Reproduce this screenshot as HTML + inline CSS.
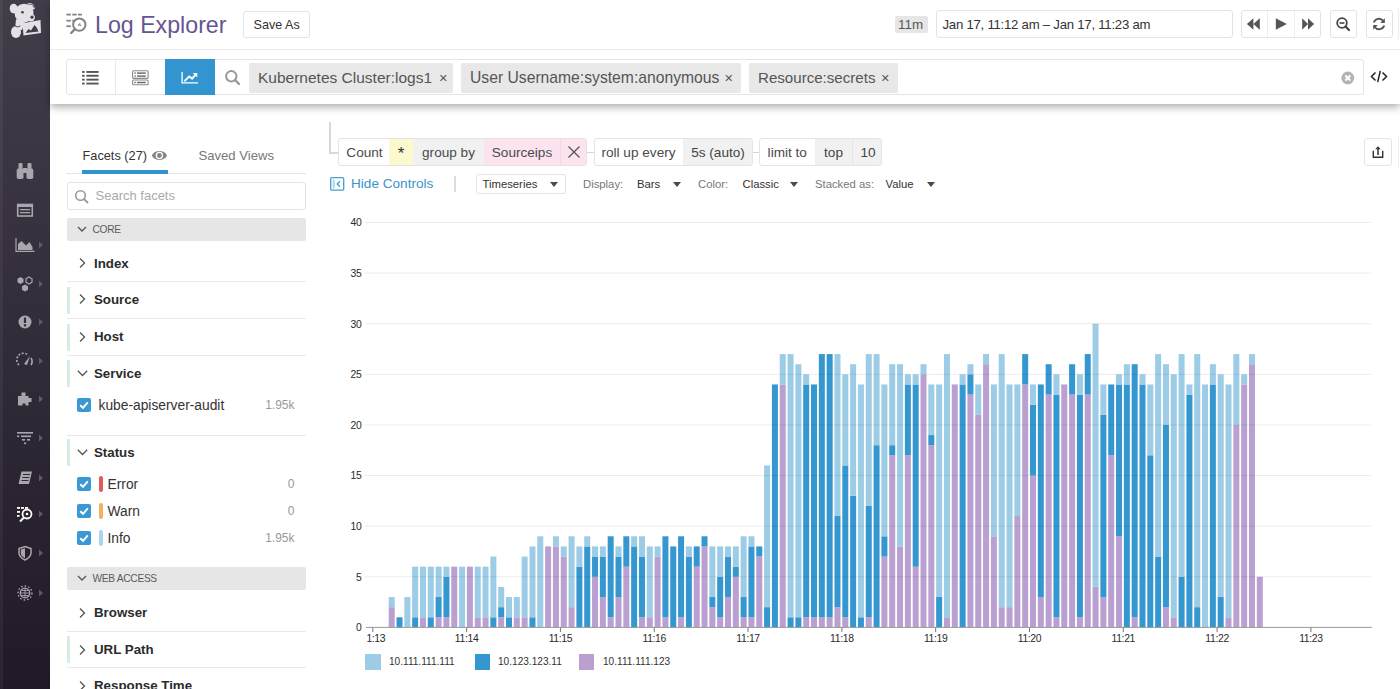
<!DOCTYPE html>
<html><head><meta charset="utf-8">
<style>
*{box-sizing:border-box;margin:0;padding:0}
html,body{width:1400px;height:689px;overflow:hidden;background:#fff;font-family:"Liberation Sans",sans-serif;color:#333}
.a{position:absolute}
.t{position:absolute;white-space:nowrap;line-height:1}
#side{left:0;top:0;width:50px;height:689px;background:linear-gradient(#433d4a,#211926)}
#hdr{left:50px;top:0;width:1350px;height:104px;background:#fff;box-shadow:0 3px 8px rgba(0,0,0,0.33)}
.btn{position:absolute;border:1px solid #e3e3e3;border-radius:3px;background:#fff}
.tag{position:absolute;top:62.5px;height:30.5px;background:#e8e8e8;border-radius:2px;color:#555;font-size:15.5px;line-height:30px;white-space:nowrap}
.tag .x{position:absolute;font-size:14.5px;color:#555}
.frow{position:absolute;left:67px;width:239px;height:37px;border-bottom:1px solid #e8e8e8}
.frow .gb{position:absolute;left:0;top:5px;width:3px;height:27px;background:#d3eedc}
.frow .lab{position:absolute;left:27px;top:0;line-height:36px;font-size:13.7px;font-weight:bold;color:#2b2b2b;white-space:nowrap}
.chev{position:absolute}
.sect{position:absolute;left:67px;width:239px;height:23px;background:#e6e6e6;border-radius:2px;color:#5a5a5a;font-size:10.2px;letter-spacing:-0.3px;line-height:23px}
.cb{position:absolute;left:77px;width:14px;height:14px;background:#3a98d4;border-radius:2px}
.item{position:absolute;font-size:13.8px;color:#333;white-space:nowrap;line-height:16px}
.cnt{position:absolute;font-size:12px;color:#999;white-space:nowrap;line-height:16px;text-align:right;width:60px;left:234.5px}
.qb{position:absolute;top:138px;height:27.5px;border:1px solid #e4e4e4;border-radius:3px;background:#fff;overflow:hidden}
.qc{position:absolute;top:0;height:25.5px;line-height:27px;font-size:13.6px;color:#4a4a4a;white-space:nowrap}
.dd{position:absolute;font-size:11.3px;color:#333;white-space:nowrap;line-height:14px}
.dl{position:absolute;font-size:11.3px;color:#777;white-space:nowrap;line-height:14px}
.arr{position:absolute;width:0;height:0;border-left:4px solid transparent;border-right:4px solid transparent;border-top:5px solid #4a4a4a}
</style></head><body>

<div id="side" class="a">
<div class="a" style="left:0;top:0;width:2.5px;height:689px;background:rgba(255,255,255,0.05)"></div>
<svg class="a" style="left:8px;top:2px" width="36" height="38" viewBox="0 0 36 38">
<g fill="#e3e1e6">
<ellipse cx="16" cy="11" rx="9.5" ry="9.3"/>
<ellipse cx="5.6" cy="6.5" rx="3.9" ry="4.8"/>
<path d="M19 2 C22 -0.5 26 1.5 27 6.5 L24.5 8 Z"/>
<ellipse cx="22.5" cy="15.5" rx="4.5" ry="4"/>
<path d="M8 17 L17 20 L14 28 L7 28 Z"/>
<ellipse cx="8" cy="30" rx="5" ry="6"/>
<path d="M14.5 21.3 L32.5 18 L33 31 L15.5 33.5 Z"/>
</g>
<path d="M17.5 31 L20.5 27 L23 28.5 L26.5 23 L29 26 L30.5 29.5 Z" fill="#423c49"/>
<path d="M6 23.5 Q10 26 12.5 24" fill="none" stroke="#423c49" stroke-width="0.9"/>
<circle cx="14.5" cy="10.2" r="1.3" fill="#423c49"/><circle cx="24" cy="15.2" r="1.6" fill="#423c49"/>
<path d="M20.2 2.5 C23 1.5 25.5 3 26 6" fill="none" stroke="#423c49" stroke-width="0.8"/>
</svg>
<svg class="a" style="left:10px;top:161px" width="30" height="20" viewBox="-15 -10 30 20"><rect x="-8.3" y="-2.5" width="6.8" height="10.5" rx="1.8" fill="#aaa6b0"/><rect x="1.5" y="-2.5" width="6.8" height="10.5" rx="1.8" fill="#aaa6b0"/><rect x="-6.5" y="-8" width="4" height="7" rx="1" fill="#aaa6b0"/><rect x="2.5" y="-8" width="4" height="7" rx="1" fill="#aaa6b0"/><rect x="-2" y="-3" width="4" height="5" fill="#aaa6b0"/></svg>
<svg class="a" style="left:10px;top:199.5px" width="30" height="20" viewBox="-15 -10 30 20"><rect x="-7.3" y="-5.5" width="14.6" height="11.5" fill="none" stroke="#aaa6b0" stroke-width="1.6"/><rect x="-7" y="-5.5" width="14" height="2.5" fill="#aaa6b0"/><rect x="-5" y="-1" width="10" height="1.3" fill="#aaa6b0"/><rect x="-5" y="2" width="10" height="1.3" fill="#aaa6b0"/></svg>
<svg class="a" style="left:10px;top:235px" width="30" height="20" viewBox="-15 -10 30 20"><path d="M-9 -7 V6.3 H9.5" fill="none" stroke="#aaa6b0" stroke-width="1.2"/><path d="M-7 5 V-1 L-3.5 -4 L1 0.5 L4.5 -3 L7.5 2 V5 Z" fill="#aaa6b0"/></svg>
<svg class="a" style="left:38px;top:241px" width="6" height="8" viewBox="0 0 6 8"><path d="M1 0.5 L5 4 L1 7.5 Z" fill="#5f5a68"/></svg>
<svg class="a" style="left:10px;top:273.5px" width="30" height="20" viewBox="-15 -10 30 20"><path d="M-4.5 -7 L-1.5 -5.2 V-1.8 L-4.5 0 L-7.5 -1.8 V-5.2 Z" fill="#aaa6b0"/><path d="M4 -7 L7 -5.2 V-1.8 L4 0 L1 -1.8 V-5.2 Z" fill="none" stroke="#aaa6b0" stroke-width="1.2"/><path d="M0 0.5 L3 2.3 V5.7 L0 7.5 L-3 5.7 V2.3 Z" fill="#aaa6b0"/></svg>
<svg class="a" style="left:38px;top:279.5px" width="6" height="8" viewBox="0 0 6 8"><path d="M1 0.5 L5 4 L1 7.5 Z" fill="#5f5a68"/></svg>
<svg class="a" style="left:10px;top:312.3px" width="30" height="20" viewBox="-15 -10 30 20"><circle cx="0" cy="0" r="6.5" fill="#aaa6b0"/><rect x="-1.1" y="-4.5" width="2.2" height="5.5" fill="#342e3b"/><rect x="-1.1" y="2.2" width="2.2" height="2.2" fill="#342e3b"/></svg>
<svg class="a" style="left:38px;top:318.3px" width="6" height="8" viewBox="0 0 6 8"><path d="M1 0.5 L5 4 L1 7.5 Z" fill="#5f5a68"/></svg>
<svg class="a" style="left:10px;top:350.7px" width="30" height="20" viewBox="-15 -10 30 20"><path d="M-6 4 A6.5 6.5 0 0 1 3 -6" fill="none" stroke="#aaa6b0" stroke-width="1.6" stroke-dasharray="2 1.5"/><path d="M-1 3 L5 -5 L2 4 Z" fill="#aaa6b0"/><path d="M6 -3 A6.5 6.5 0 0 1 6 4" fill="none" stroke="#aaa6b0" stroke-width="1.6"/></svg>
<svg class="a" style="left:38px;top:356.7px" width="6" height="8" viewBox="0 0 6 8"><path d="M1 0.5 L5 4 L1 7.5 Z" fill="#5f5a68"/></svg>
<svg class="a" style="left:10px;top:389.4px" width="30" height="20" viewBox="-15 -10 30 20"><path d="M-7 -3 H-3.5 V-6.5 H0.5 V-3 H3.5 V-1 H6.5 V3 H3.5 V6.5 H0.5 V4.5 H-2.5 V6.5 H-7 Z" fill="#aaa6b0"/></svg>
<svg class="a" style="left:38px;top:395.4px" width="6" height="8" viewBox="0 0 6 8"><path d="M1 0.5 L5 4 L1 7.5 Z" fill="#5f5a68"/></svg>
<svg class="a" style="left:10px;top:427.5px" width="30" height="20" viewBox="-15 -10 30 20"><rect x="-8" y="-6" width="16" height="1.6" fill="#aaa6b0"/><rect x="-8" y="-2.5" width="2.2" height="1.6" fill="#aaa6b0"/><rect x="-4" y="-2.5" width="10" height="1.6" fill="#aaa6b0"/><rect x="-3" y="1" width="3" height="1.6" fill="#aaa6b0"/><rect x="2" y="1" width="3" height="1.6" fill="#aaa6b0"/><rect x="-1" y="4.5" width="2.2" height="1.6" fill="#aaa6b0"/></svg>
<svg class="a" style="left:38px;top:433.5px" width="6" height="8" viewBox="0 0 6 8"><path d="M1 0.5 L5 4 L1 7.5 Z" fill="#5f5a68"/></svg>
<svg class="a" style="left:10px;top:467.8px" width="30" height="20" viewBox="-15 -10 30 20"><path d="M-6.5 6 L-3.5 -6.5 H7 L4 6 Z" fill="#aaa6b0"/><path d="M-2 -3.5 H5 M-2.7 -0.5 H4.3 M-3.5 2.5 H3.5" stroke="#2e2835" stroke-width="1"/></svg>
<svg class="a" style="left:38px;top:473.8px" width="6" height="8" viewBox="0 0 6 8"><path d="M1 0.5 L5 4 L1 7.5 Z" fill="#5f5a68"/></svg>
<svg class="a" style="left:10px;top:504px" width="30" height="20" viewBox="-15 -10 30 20"><g fill="#fff"><rect x="-8" y="-7" width="3" height="1.8"/><rect x="-4" y="-7" width="3" height="1.8"/><rect x="0" y="-7" width="3" height="1.8"/><rect x="-8" y="-3" width="3" height="1.8"/><rect x="-8" y="1" width="2.5" height="1.8"/></g><circle cx="2" cy="0" r="4.5" fill="none" stroke="#fff" stroke-width="1.8"/><line x1="-1" y1="3.5" x2="-5" y2="7.5" stroke="#fff" stroke-width="2"/><circle cx="2" cy="0" r="1.3" fill="#fff"/></svg>
<svg class="a" style="left:38px;top:510px" width="6" height="8" viewBox="0 0 6 8"><path d="M1 0.5 L5 4 L1 7.5 Z" fill="#5f5a68"/></svg>
<svg class="a" style="left:10px;top:543.4px" width="30" height="20" viewBox="-15 -10 30 20"><path d="M0 -6.5 L6 -4.5 V0 C6 3.5 3 5.5 0 7 C-3 5.5 -6 3.5 -6 0 V-4.5 Z" fill="none" stroke="#aaa6b0" stroke-width="1.5"/><path d="M0 -4.8 L-4.2 -3.4 V0 C-4.2 2.8 -2 4.2 0 5.2 Z" fill="#aaa6b0"/></svg>
<svg class="a" style="left:38px;top:549.4px" width="6" height="8" viewBox="0 0 6 8"><path d="M1 0.5 L5 4 L1 7.5 Z" fill="#5f5a68"/></svg>
<svg class="a" style="left:10px;top:582.5px" width="30" height="20" viewBox="-15 -10 30 20"><circle cx="0" cy="0" r="4.8" fill="none" stroke="#aaa6b0" stroke-width="1.3"/><path d="M-4.8 0 H4.8 M0 -4.8 V4.8 M-3.5 -2.5 H3.5 M-3.5 2.5 H3.5" stroke="#aaa6b0" stroke-width="0.9"/><circle cx="0" cy="0" r="7" fill="none" stroke="#aaa6b0" stroke-width="1.3" stroke-dasharray="1.6 2"/></svg>
<svg class="a" style="left:38px;top:588.5px" width="6" height="8" viewBox="0 0 6 8"><path d="M1 0.5 L5 4 L1 7.5 Z" fill="#5f5a68"/></svg>
</div>

<div id="hdr" class="a"></div>
<div class="a" style="left:50px;top:49px;width:1350px;height:1px;background:#e9e9e9"></div>

<!-- Log explorer icon -->
<svg class="a" style="left:65px;top:12px" width="24" height="24" viewBox="0 0 24 24">
  <g fill="#858585">
    <rect x="1.4" y="1.7" width="4.5" height="1.8"/><rect x="7.2" y="1.7" width="4.5" height="1.8"/><rect x="13" y="1.7" width="3.9" height="1.8"/>
    <rect x="1.4" y="7.8" width="4.5" height="1.8"/><rect x="7.2" y="7.8" width="2" height="1.8"/>
    <rect x="1.4" y="13.3" width="4.5" height="1.8"/>
  </g>
  <circle cx="14.3" cy="12.6" r="6.2" fill="none" stroke="#858585" stroke-width="2"/>
  <line x1="10" y1="17" x2="6.2" y2="21" stroke="#858585" stroke-width="2.4" stroke-linecap="round"/>
  <path d="M13 13.5 l2.2 -2.2 M14.6 14.2 l1.6 -1.6" stroke="#8a8a8a" stroke-width="1.1"/>
</svg>
<div class="t" style="left:95px;top:12px;font-size:23.2px;color:#67558f;line-height:26px">Log Explorer</div>

<div class="btn" style="left:243px;top:10.5px;width:67px;height:27.5px"></div>
<div class="t" style="left:253.5px;top:18px;font-size:12.6px;color:#333;line-height:15px">Save As</div>

<!-- 11m & date -->
<div class="a" style="left:894.5px;top:15.5px;width:33px;height:17.5px;background:#e6e6e6;border-radius:2px"></div>
<div class="t" style="left:898px;top:17px;font-size:13.4px;color:#555;line-height:15px">11m</div>
<div class="btn" style="left:936px;top:10px;width:297px;height:27.5px"></div>
<div class="t" style="left:942.5px;top:16.5px;font-size:13.2px;letter-spacing:-0.25px;color:#333;line-height:15px">Jan 17, 11:12 am – Jan 17, 11:23 am</div>

<!-- time buttons -->
<div class="btn" style="left:1240.5px;top:10px;width:80px;height:27.5px"></div>
<div class="a" style="left:1267px;top:11px;width:1px;height:26px;background:#ececec"></div>
<div class="a" style="left:1294px;top:11px;width:1px;height:26px;background:#ececec"></div>
<svg class="a" style="left:1240px;top:10px" width="82" height="28" viewBox="0 0 82 28">
  <g fill="#555">
    <path d="M6.9 14 L13.4 8.2 V19.8 Z M13.4 14 L19.8 8.2 V19.8 Z"/>
    <path d="M35.8 8.2 L46.8 14 L35.8 19.8 Z"/>
    <path d="M62.2 8.2 L68 14 L62.2 19.8 Z M68 8.2 L74.1 14 L68 19.8 Z"/>
  </g>
</svg>
<div class="btn" style="left:1329.5px;top:10px;width:27px;height:27.5px"></div>
<svg class="a" style="left:1329px;top:10px" width="28" height="28" viewBox="0 0 28 28">
  <circle cx="13" cy="13" r="4.8" fill="none" stroke="#444" stroke-width="1.8"/>
  <line x1="16.5" y1="16.5" x2="20" y2="20" stroke="#444" stroke-width="2.2" stroke-linecap="round"/>
  <line x1="10.6" y1="13" x2="15.4" y2="13" stroke="#444" stroke-width="1.6"/>
</svg>
<div class="btn" style="left:1365.5px;top:10px;width:27px;height:27.5px"></div>
<svg class="a" style="left:1365px;top:10px" width="28" height="28" viewBox="0 0 28 28">
  <path d="M8.8 12.5 A5.3 5.3 0 0 1 18.2 11" fill="none" stroke="#555" stroke-width="1.9"/>
  <path d="M19.2 15.5 A5.3 5.3 0 0 1 9.8 17" fill="none" stroke="#555" stroke-width="1.9"/>
  <path d="M19.8 8.3 V13 H15.2 Z" fill="#555"/>
  <path d="M8.2 19.7 V15 H12.8 Z" fill="#555"/>
</svg>
<div class="a" style="left:1398px;top:8px;width:1px;height:32px;background:#ececec"></div>
<div class="a" style="left:1398px;top:136px;width:1px;height:32px;background:#ececec"></div>

<!-- search row -->
<div class="btn" style="left:66px;top:59px;width:1298px;height:36px;border-color:#e4e4e4"></div>
<div class="a" style="left:115px;top:60px;width:1px;height:34px;background:#e9e9e9"></div>
<div class="a" style="left:165px;top:59px;width:50px;height:36px;background:#3295cf"></div>
<svg class="a" style="left:80px;top:68px" width="24" height="18" viewBox="0 0 24 18">
  <g fill="#555"><rect x="2.1" y="3" width="2.5" height="1.9"/><rect x="6.4" y="3" width="12.2" height="1.9"/>
  <rect x="2.1" y="6.8" width="2.5" height="1.9"/><rect x="6.4" y="6.8" width="12.2" height="1.9"/>
  <rect x="2.1" y="10.7" width="2.5" height="1.9"/><rect x="6.4" y="10.7" width="12.2" height="1.9"/>
  <rect x="2.1" y="14.6" width="2.5" height="1.9"/><rect x="6.4" y="14.6" width="12.2" height="1.9"/></g>
</svg>
<svg class="a" style="left:130px;top:68px" width="22" height="18" viewBox="0 0 22 18">
  <rect x="2.6" y="2.8" width="15.5" height="7.6" rx="1" fill="none" stroke="#8a8a8a" stroke-width="1.1"/>
  <rect x="2.6" y="12" width="15.5" height="4.8" rx="1" fill="none" stroke="#8a8a8a" stroke-width="1.1"/>
  <g fill="#666"><rect x="4.4" y="4.4" width="1.4" height="1.4"/><rect x="7" y="4.4" width="8.8" height="1.4"/>
  <rect x="4.4" y="7.4" width="1.4" height="1.4"/><rect x="7" y="7.4" width="8.8" height="1.4"/>
  <rect x="4.4" y="13.8" width="1.4" height="1.4"/><rect x="7" y="13.8" width="8.8" height="1.4"/></g>
</svg>
<svg class="a" style="left:180px;top:68px" width="20" height="18" viewBox="0 0 20 18">
  <path d="M2.1 3.9 V14.9 H18" fill="none" stroke="#fff" stroke-width="1.3"/>
  <path d="M4.3 13.2 L9.3 8.4 L12.1 10.6 L15.3 7" fill="none" stroke="#fff" stroke-width="1.9"/>
  <path d="M12.8 5 H17.3 V9.5 Z" fill="#fff"/>
</svg>
<svg class="a" style="left:223px;top:68px" width="20" height="20" viewBox="0 0 20 20">
  <circle cx="8.3" cy="8.3" r="5.2" fill="none" stroke="#999" stroke-width="2"/>
  <line x1="12" y1="12" x2="16" y2="16" stroke="#999" stroke-width="2.4" stroke-linecap="round"/>
</svg>

<div class="tag" style="left:249px;width:204px"><span style="position:absolute;left:9px">Kubernetes Cluster:logs1</span><span class="x" style="left:190px">×</span></div>
<div class="tag" style="left:460.5px;width:280px"><span style="position:absolute;left:9.5px;font-size:15.7px">User Username:system:anonymous</span><span class="x" style="left:264px">×</span></div>
<div class="tag" style="left:749px;width:148.5px"><span style="position:absolute;left:9px;font-size:15.1px">Resource:secrets</span><span class="x" style="left:132px">×</span></div>

<svg class="a" style="left:1339px;top:69px" width="18" height="18" viewBox="0 0 18 18">
  <circle cx="8.8" cy="9" r="6.4" fill="#b3b3b3"/>
  <path d="M6.3 6.5 L11.3 11.5 M11.3 6.5 L6.3 11.5" stroke="#fff" stroke-width="1.9"/>
</svg>
<svg class="a" style="left:1369px;top:68px" width="20" height="18" viewBox="0 0 20 18">
  <path d="M6.5 4.5 L2.5 8.5 L6.5 12.5 M13.5 4.5 L17.5 8.5 L13.5 12.5 M11.3 2.8 L8.7 14.2" fill="none" stroke="#222" stroke-width="1.5"/>
</svg>

<!-- facets panel -->
<div class="t" style="left:82.5px;top:148px;font-size:12.75px;color:#333;line-height:16px">Facets (27)</div>
<svg class="a" style="left:151px;top:149px" width="18" height="14" viewBox="0 0 18 14">
  <path d="M0.8 6.5 C3.3 0.6 13.5 0.6 16 6.5 C13.5 12.4 3.3 12.4 0.8 6.5 Z" fill="#858585"/>
  <circle cx="8.4" cy="6.5" r="3.7" fill="#fff"/>
  <circle cx="8.4" cy="6.5" r="2.4" fill="#858585"/>
</svg>
<div class="t" style="left:198.5px;top:148px;font-size:13.1px;color:#777;line-height:16px">Saved Views</div>
<div class="a" style="left:65.5px;top:173px;width:240px;height:1px;background:#e6e6e6"></div>
<div class="a" style="left:82px;top:169.5px;width:86px;height:4px;background:#3193cd"></div>

<div class="btn" style="left:67px;top:182px;width:239px;height:28px;border-color:#e2e2e2"></div>
<svg class="a" style="left:73px;top:188px" width="18" height="18" viewBox="0 0 18 18">
  <circle cx="7.5" cy="7.5" r="4.8" fill="none" stroke="#999" stroke-width="1.6"/>
  <line x1="11" y1="11" x2="14.5" y2="14.5" stroke="#999" stroke-width="1.8" stroke-linecap="round"/>
</svg>
<div class="t" style="left:95.5px;top:188px;font-size:13px;color:#aaa;line-height:16px">Search facets</div>

<div class="sect" style="top:218px"><svg class="chev" style="left:10px;top:7px" width="10" height="8" viewBox="0 0 10 8"><path d="M1 2 L5 6 L9 2" fill="none" stroke="#555" stroke-width="1.3"/></svg><span style="position:absolute;left:25.5px">CORE</span></div>

<svg class="a" style="left:77px;top:257.2px" width="10" height="12" viewBox="0 0 10 12"><path d="M3 1.5 L7.5 6 L3 10.5" fill="none" stroke="#555" stroke-width="1.3"/></svg>
<div class="t" style="left:94px;top:255.7px;font-size:13.3px;font-weight:bold;color:#2b2b2b;line-height:16px">Index</div>
<div class="a" style="left:66.5px;top:281px;width:239.5px;height:1px;background:#e8e8e8"></div>
<div class="a" style="left:67px;top:286.5px;width:3px;height:27.0px;background:#d5eedd"></div>
<svg class="a" style="left:77px;top:293.4px" width="10" height="12" viewBox="0 0 10 12"><path d="M3 1.5 L7.5 6 L3 10.5" fill="none" stroke="#555" stroke-width="1.3"/></svg>
<div class="t" style="left:94px;top:291.9px;font-size:13.3px;font-weight:bold;color:#2b2b2b;line-height:16px">Source</div>
<div class="a" style="left:66.5px;top:317.5px;width:239.5px;height:1px;background:#e8e8e8"></div>
<div class="a" style="left:67px;top:323.5px;width:3px;height:27.0px;background:#d5eedd"></div>
<svg class="a" style="left:77px;top:330.6px" width="10" height="12" viewBox="0 0 10 12"><path d="M3 1.5 L7.5 6 L3 10.5" fill="none" stroke="#555" stroke-width="1.3"/></svg>
<div class="t" style="left:94px;top:329.1px;font-size:13.3px;font-weight:bold;color:#2b2b2b;line-height:16px">Host</div>
<div class="a" style="left:66.5px;top:355px;width:239.5px;height:1px;background:#e8e8e8"></div>
<div class="a" style="left:67px;top:360px;width:3px;height:27px;background:#d5eedd"></div>
<svg class="a" style="left:76px;top:368.2px" width="13" height="10" viewBox="0 0 13 10"><path d="M1.8 2.8 L6.5 7.5 L11.2 2.8" fill="none" stroke="#555" stroke-width="1.3"/></svg>
<div class="t" style="left:94px;top:365.7px;font-size:13.3px;font-weight:bold;color:#2b2b2b;line-height:16px">Service</div>
<div class="a" style="left:66.5px;top:434.5px;width:239.5px;height:1px;background:#e8e8e8"></div>
<div class="a" style="left:67px;top:439px;width:3px;height:27px;background:#d5eedd"></div>
<svg class="a" style="left:76px;top:447px" width="13" height="10" viewBox="0 0 13 10"><path d="M1.8 2.8 L6.5 7.5 L11.2 2.8" fill="none" stroke="#555" stroke-width="1.3"/></svg>
<div class="t" style="left:94px;top:444.5px;font-size:13.3px;font-weight:bold;color:#2b2b2b;line-height:16px">Status</div>
<div class="cb" style="top:398.2px"></div>
<svg class="a" style="left:77px;top:398.2px" width="14" height="14" viewBox="0 0 14 14"><path d="M3.2 7.2 L6 9.8 L10.8 4.4" fill="none" stroke="#fff" stroke-width="2"/></svg>
<div class="item" style="left:98.5px;top:398.0px">kube-apiserver-audit</div>
<div class="cnt" style="top:397.2px">1.95k</div>
<div class="cb" style="top:476.8px"></div>
<svg class="a" style="left:77px;top:476.8px" width="14" height="14" viewBox="0 0 14 14"><path d="M3.2 7.2 L6 9.8 L10.8 4.4" fill="none" stroke="#fff" stroke-width="2"/></svg>
<div class="a" style="left:98.5px;top:475.8px;width:4.5px;height:16px;border-radius:2px;background:#e45a5a"></div>
<div class="item" style="left:107.5px;top:476.6px">Error</div>
<div class="cnt" style="top:475.8px">0</div>
<div class="cb" style="top:504px"></div>
<svg class="a" style="left:77px;top:504px" width="14" height="14" viewBox="0 0 14 14"><path d="M3.2 7.2 L6 9.8 L10.8 4.4" fill="none" stroke="#fff" stroke-width="2"/></svg>
<div class="a" style="left:98.5px;top:503px;width:4.5px;height:16px;border-radius:2px;background:#f2b25b"></div>
<div class="item" style="left:107.5px;top:503.8px">Warn</div>
<div class="cnt" style="top:503px">0</div>
<div class="cb" style="top:531.4px"></div>
<svg class="a" style="left:77px;top:531.4px" width="14" height="14" viewBox="0 0 14 14"><path d="M3.2 7.2 L6 9.8 L10.8 4.4" fill="none" stroke="#fff" stroke-width="2"/></svg>
<div class="a" style="left:98.5px;top:530.4px;width:4.5px;height:16px;border-radius:2px;background:#a9d5ee"></div>
<div class="item" style="left:107.5px;top:531.1999999999999px">Info</div>
<div class="cnt" style="top:530.4px">1.95k</div>
<div class="sect" style="top:567px"><svg class="chev" style="left:10px;top:7px" width="10" height="8" viewBox="0 0 10 8"><path d="M1 2 L5 6 L9 2" fill="none" stroke="#555" stroke-width="1.3"/></svg><span style="position:absolute;left:25.5px">WEB ACCESS</span></div>
<svg class="a" style="left:77px;top:606.9px" width="10" height="12" viewBox="0 0 10 12"><path d="M3 1.5 L7.5 6 L3 10.5" fill="none" stroke="#555" stroke-width="1.3"/></svg>
<div class="t" style="left:94px;top:605.4px;font-size:13.3px;font-weight:bold;color:#2b2b2b;line-height:16px">Browser</div>
<div class="a" style="left:66.5px;top:630.5px;width:239.5px;height:1px;background:#e8e8e8"></div>
<div class="a" style="left:67px;top:635.5px;width:3px;height:27.0px;background:#d5eedd"></div>
<svg class="a" style="left:77px;top:643.5px" width="10" height="12" viewBox="0 0 10 12"><path d="M3 1.5 L7.5 6 L3 10.5" fill="none" stroke="#555" stroke-width="1.3"/></svg>
<div class="t" style="left:94px;top:642.0px;font-size:13.3px;font-weight:bold;color:#2b2b2b;line-height:16px">URL Path</div>
<div class="a" style="left:66.5px;top:667px;width:239.5px;height:1px;background:#e8e8e8"></div>
<svg class="a" style="left:77px;top:679.7px" width="10" height="12" viewBox="0 0 10 12"><path d="M3 1.5 L7.5 6 L3 10.5" fill="none" stroke="#555" stroke-width="1.3"/></svg>
<div class="t" style="left:94px;top:678.2px;font-size:13.3px;font-weight:bold;color:#2b2b2b;line-height:16px">Response Time</div>

<!-- query bar -->
<div class="a" style="left:328.5px;top:122px;width:2px;height:31px;background:#d9d9d9"></div>
<div class="a" style="left:328.5px;top:151.5px;width:10px;height:2px;background:#d9d9d9"></div>
<div class="qb" style="left:338px;width:248.5px">
  <div class="qc" style="left:0;width:50px;text-align:center;padding-left:1px">Count</div>
  <div class="qc" style="left:50px;width:24px;background:#fcf9cf;text-align:center;color:#333;font-size:17px;line-height:29px">*</div>
  <div class="qc" style="left:74px;width:71px;background:#f1f1f1;text-align:center">group by</div>
  <div class="qc" style="left:145px;width:76px;background:#fbe3ef;text-align:center">Sourceips</div>
  <div class="qc" style="left:221px;width:27px;background:#fbe3ef;border-left:1px solid #f3d6e4"></div>
  <svg class="a" style="left:228px;top:6px" width="14" height="14" viewBox="0 0 14 14"><path d="M1.5 1.5 L12.5 12.5 M12.5 1.5 L1.5 12.5" stroke="#555" stroke-width="1.3"/></svg>
</div>
<div class="a" style="left:586.5px;top:152px;width:7px;height:1px;background:#d5d5d5"></div>
<div class="qb" style="left:593.5px;width:159px">
  <div class="qc" style="left:0;width:88px;text-align:center">roll up every</div>
  <div class="qc" style="left:88px;width:71px;background:#f1f1f1;text-align:center;color:#444">5s (auto)</div>
</div>
<div class="a" style="left:752.5px;top:152px;width:6px;height:1px;background:#d5d5d5"></div>
<div class="qb" style="left:758.5px;width:123.5px">
  <div class="qc" style="left:0;width:55.5px;text-align:center">limit to</div>
  <div class="qc" style="left:55.5px;width:37px;background:#f1f1f1;text-align:center;color:#444">top</div>
  <div class="qc" style="left:92.5px;width:31px;background:#f1f1f1;text-align:center;color:#444;border-left:1px solid #e6e6e6">10</div>
</div>

<svg class="a" style="left:329.5px;top:177px" width="15" height="14" viewBox="0 0 15 14">
  <rect x="0.7" y="0.7" width="13" height="12.4" rx="1.2" fill="none" stroke="#4a9fd0" stroke-width="1.3"/>
  <rect x="2.6" y="2.5" width="2.2" height="9" fill="#b5d8ee"/>
  <path d="M10 4.3 L7.3 7 L10 9.7" fill="none" stroke="#4a9fd0" stroke-width="1.4"/>
</svg>
<div class="t" style="left:351px;top:176px;font-size:13.6px;color:#3a94c9;line-height:16px">Hide Controls</div>
<div class="a" style="left:454px;top:176px;width:2px;height:16px;background:#dcdcdc"></div>

<div class="btn" style="left:475.5px;top:174px;width:90px;height:19.5px;border-color:#e3e3e3"></div>
<div class="dd" style="left:482.5px;top:177px">Timeseries</div>
<div class="arr" style="left:549.5px;top:181.5px"></div>
<div class="dl" style="left:583px;top:177px">Display:</div>
<div class="dd" style="left:637px;top:177px">Bars</div>
<div class="arr" style="left:672.5px;top:181.5px"></div>
<div class="dl" style="left:698px;top:177px">Color:</div>
<div class="dd" style="left:742.5px;top:177px">Classic</div>
<div class="arr" style="left:789.5px;top:181.5px"></div>
<div class="dl" style="left:815px;top:177px">Stacked as:</div>
<div class="dd" style="left:885.5px;top:177px">Value</div>
<div class="arr" style="left:926.5px;top:181.5px"></div>

<div class="btn" style="left:1364px;top:138px;width:27.5px;height:27.5px"></div>
<svg class="a" style="left:1370px;top:144px" width="16" height="16" viewBox="0 0 16 16">
  <path d="M4 7.5 H3.3 V13.3 H12.7 V7.5 H12" fill="none" stroke="#333" stroke-width="1.4"/>
  <line x1="8" y1="4.5" x2="8" y2="11" stroke="#333" stroke-width="1.5"/>
  <path d="M5.3 5.3 L8 2.2 L10.7 5.3 Z" fill="#333"/>
</svg>

<svg style="position:absolute;left:0;top:0" width="1400" height="689">
<rect x="388.70" y="607.15" width="6.0" height="20.25" fill="#b9a0d1"/>
<rect x="388.70" y="597.03" width="6.0" height="10.12" fill="#9ccce6"/>
<rect x="396.52" y="617.28" width="6.0" height="10.12" fill="#3597cf"/>
<rect x="404.34" y="597.03" width="6.0" height="30.37" fill="#9ccce6"/>
<rect x="412.16" y="617.28" width="6.0" height="10.12" fill="#3597cf"/>
<rect x="412.16" y="566.66" width="6.0" height="50.61" fill="#9ccce6"/>
<rect x="419.98" y="617.28" width="6.0" height="10.12" fill="#b9a0d1"/>
<rect x="419.98" y="566.66" width="6.0" height="50.61" fill="#9ccce6"/>
<rect x="427.80" y="617.28" width="6.0" height="10.12" fill="#3597cf"/>
<rect x="427.80" y="566.66" width="6.0" height="50.61" fill="#9ccce6"/>
<rect x="435.62" y="617.28" width="6.0" height="10.12" fill="#b9a0d1"/>
<rect x="435.62" y="597.03" width="6.0" height="20.25" fill="#3597cf"/>
<rect x="435.62" y="566.66" width="6.0" height="30.37" fill="#9ccce6"/>
<rect x="443.44" y="617.28" width="6.0" height="10.12" fill="#b9a0d1"/>
<rect x="443.44" y="576.78" width="6.0" height="40.49" fill="#3597cf"/>
<rect x="443.44" y="566.66" width="6.0" height="10.12" fill="#9ccce6"/>
<rect x="451.27" y="566.66" width="6.0" height="60.74" fill="#b9a0d1"/>
<rect x="459.09" y="566.66" width="6.0" height="60.74" fill="#9ccce6"/>
<rect x="466.91" y="566.66" width="6.0" height="60.74" fill="#b9a0d1"/>
<rect x="474.73" y="617.28" width="6.0" height="10.12" fill="#b9a0d1"/>
<rect x="474.73" y="566.66" width="6.0" height="50.61" fill="#9ccce6"/>
<rect x="482.55" y="617.28" width="6.0" height="10.12" fill="#b9a0d1"/>
<rect x="482.55" y="566.66" width="6.0" height="50.61" fill="#9ccce6"/>
<rect x="490.37" y="617.28" width="6.0" height="10.12" fill="#3597cf"/>
<rect x="490.37" y="556.54" width="6.0" height="60.74" fill="#9ccce6"/>
<rect x="498.19" y="617.28" width="6.0" height="10.12" fill="#b9a0d1"/>
<rect x="498.19" y="607.15" width="6.0" height="10.12" fill="#3597cf"/>
<rect x="498.19" y="586.91" width="6.0" height="20.25" fill="#9ccce6"/>
<rect x="506.01" y="617.28" width="6.0" height="10.12" fill="#3597cf"/>
<rect x="506.01" y="597.03" width="6.0" height="20.25" fill="#9ccce6"/>
<rect x="513.83" y="617.28" width="6.0" height="10.12" fill="#b9a0d1"/>
<rect x="513.83" y="597.03" width="6.0" height="20.25" fill="#9ccce6"/>
<rect x="521.65" y="617.28" width="6.0" height="10.12" fill="#b9a0d1"/>
<rect x="521.65" y="556.54" width="6.0" height="60.74" fill="#9ccce6"/>
<rect x="529.47" y="617.28" width="6.0" height="10.12" fill="#3597cf"/>
<rect x="529.47" y="546.42" width="6.0" height="70.86" fill="#9ccce6"/>
<rect x="537.29" y="536.29" width="6.0" height="91.11" fill="#9ccce6"/>
<rect x="545.11" y="546.42" width="6.0" height="80.98" fill="#b9a0d1"/>
<rect x="552.93" y="546.42" width="6.0" height="80.98" fill="#b9a0d1"/>
<rect x="552.93" y="536.29" width="6.0" height="10.12" fill="#9ccce6"/>
<rect x="560.76" y="556.54" width="6.0" height="70.86" fill="#b9a0d1"/>
<rect x="560.76" y="546.42" width="6.0" height="10.12" fill="#9ccce6"/>
<rect x="568.58" y="607.15" width="6.0" height="20.25" fill="#b9a0d1"/>
<rect x="568.58" y="536.29" width="6.0" height="70.86" fill="#9ccce6"/>
<rect x="576.40" y="566.66" width="6.0" height="60.74" fill="#3597cf"/>
<rect x="576.40" y="546.42" width="6.0" height="20.25" fill="#9ccce6"/>
<rect x="584.22" y="546.42" width="6.0" height="80.98" fill="#3597cf"/>
<rect x="584.22" y="536.29" width="6.0" height="10.12" fill="#9ccce6"/>
<rect x="592.04" y="576.78" width="6.0" height="50.62" fill="#b9a0d1"/>
<rect x="592.04" y="556.54" width="6.0" height="20.25" fill="#3597cf"/>
<rect x="592.04" y="546.42" width="6.0" height="10.12" fill="#9ccce6"/>
<rect x="599.86" y="597.03" width="6.0" height="30.37" fill="#b9a0d1"/>
<rect x="599.86" y="556.54" width="6.0" height="40.49" fill="#3597cf"/>
<rect x="599.86" y="546.42" width="6.0" height="10.12" fill="#9ccce6"/>
<rect x="607.68" y="617.28" width="6.0" height="10.12" fill="#b9a0d1"/>
<rect x="607.68" y="536.29" width="6.0" height="80.98" fill="#3597cf"/>
<rect x="615.50" y="597.03" width="6.0" height="30.37" fill="#b9a0d1"/>
<rect x="615.50" y="556.54" width="6.0" height="40.49" fill="#3597cf"/>
<rect x="615.50" y="546.42" width="6.0" height="10.12" fill="#9ccce6"/>
<rect x="623.32" y="566.66" width="6.0" height="60.74" fill="#b9a0d1"/>
<rect x="623.32" y="536.29" width="6.0" height="30.37" fill="#3597cf"/>
<rect x="631.14" y="546.42" width="6.0" height="80.98" fill="#3597cf"/>
<rect x="631.14" y="536.29" width="6.0" height="10.12" fill="#9ccce6"/>
<rect x="638.96" y="617.28" width="6.0" height="10.12" fill="#b9a0d1"/>
<rect x="638.96" y="556.54" width="6.0" height="60.74" fill="#3597cf"/>
<rect x="638.96" y="536.29" width="6.0" height="20.25" fill="#9ccce6"/>
<rect x="646.78" y="617.28" width="6.0" height="10.12" fill="#b9a0d1"/>
<rect x="646.78" y="546.42" width="6.0" height="70.86" fill="#9ccce6"/>
<rect x="654.60" y="556.54" width="6.0" height="70.86" fill="#b9a0d1"/>
<rect x="654.60" y="546.42" width="6.0" height="10.12" fill="#9ccce6"/>
<rect x="662.42" y="617.28" width="6.0" height="10.12" fill="#b9a0d1"/>
<rect x="662.42" y="536.29" width="6.0" height="80.98" fill="#3597cf"/>
<rect x="670.25" y="546.42" width="6.0" height="80.98" fill="#3597cf"/>
<rect x="678.07" y="617.28" width="6.0" height="10.12" fill="#b9a0d1"/>
<rect x="678.07" y="536.29" width="6.0" height="80.98" fill="#3597cf"/>
<rect x="685.89" y="556.54" width="6.0" height="70.86" fill="#3597cf"/>
<rect x="685.89" y="546.42" width="6.0" height="10.12" fill="#9ccce6"/>
<rect x="693.71" y="566.66" width="6.0" height="60.74" fill="#b9a0d1"/>
<rect x="693.71" y="546.42" width="6.0" height="20.25" fill="#3597cf"/>
<rect x="701.53" y="546.42" width="6.0" height="80.98" fill="#b9a0d1"/>
<rect x="701.53" y="536.29" width="6.0" height="10.12" fill="#3597cf"/>
<rect x="709.35" y="607.15" width="6.0" height="20.25" fill="#b9a0d1"/>
<rect x="709.35" y="597.03" width="6.0" height="10.12" fill="#3597cf"/>
<rect x="709.35" y="546.42" width="6.0" height="50.62" fill="#9ccce6"/>
<rect x="717.17" y="617.28" width="6.0" height="10.12" fill="#b9a0d1"/>
<rect x="717.17" y="576.78" width="6.0" height="40.49" fill="#3597cf"/>
<rect x="717.17" y="546.42" width="6.0" height="30.37" fill="#9ccce6"/>
<rect x="724.99" y="597.03" width="6.0" height="30.37" fill="#b9a0d1"/>
<rect x="724.99" y="556.54" width="6.0" height="40.49" fill="#3597cf"/>
<rect x="724.99" y="546.42" width="6.0" height="10.12" fill="#9ccce6"/>
<rect x="732.81" y="576.78" width="6.0" height="50.62" fill="#b9a0d1"/>
<rect x="732.81" y="566.66" width="6.0" height="10.12" fill="#3597cf"/>
<rect x="732.81" y="546.42" width="6.0" height="20.25" fill="#9ccce6"/>
<rect x="740.63" y="617.28" width="6.0" height="10.12" fill="#b9a0d1"/>
<rect x="740.63" y="597.03" width="6.0" height="20.25" fill="#3597cf"/>
<rect x="740.63" y="536.29" width="6.0" height="60.74" fill="#9ccce6"/>
<rect x="748.45" y="617.28" width="6.0" height="10.12" fill="#b9a0d1"/>
<rect x="748.45" y="546.42" width="6.0" height="70.86" fill="#3597cf"/>
<rect x="748.45" y="536.29" width="6.0" height="10.12" fill="#9ccce6"/>
<rect x="756.27" y="556.54" width="6.0" height="70.86" fill="#b9a0d1"/>
<rect x="756.27" y="546.42" width="6.0" height="10.12" fill="#3597cf"/>
<rect x="764.09" y="607.15" width="6.0" height="20.25" fill="#3597cf"/>
<rect x="764.09" y="465.43" width="6.0" height="141.72" fill="#9ccce6"/>
<rect x="771.91" y="384.45" width="6.0" height="242.95" fill="#3597cf"/>
<rect x="779.74" y="384.45" width="6.0" height="242.95" fill="#b9a0d1"/>
<rect x="779.74" y="354.08" width="6.0" height="30.37" fill="#9ccce6"/>
<rect x="787.56" y="617.28" width="6.0" height="10.12" fill="#3597cf"/>
<rect x="787.56" y="354.08" width="6.0" height="263.20" fill="#9ccce6"/>
<rect x="795.38" y="617.28" width="6.0" height="10.12" fill="#3597cf"/>
<rect x="795.38" y="364.20" width="6.0" height="253.07" fill="#9ccce6"/>
<rect x="803.20" y="617.28" width="6.0" height="10.12" fill="#b9a0d1"/>
<rect x="803.20" y="384.45" width="6.0" height="232.83" fill="#3597cf"/>
<rect x="803.20" y="374.32" width="6.0" height="10.12" fill="#9ccce6"/>
<rect x="811.02" y="617.28" width="6.0" height="10.12" fill="#b9a0d1"/>
<rect x="811.02" y="384.45" width="6.0" height="232.83" fill="#3597cf"/>
<rect x="818.84" y="617.28" width="6.0" height="10.12" fill="#b9a0d1"/>
<rect x="818.84" y="354.08" width="6.0" height="263.20" fill="#3597cf"/>
<rect x="826.66" y="617.28" width="6.0" height="10.12" fill="#b9a0d1"/>
<rect x="826.66" y="354.08" width="6.0" height="263.20" fill="#3597cf"/>
<rect x="834.48" y="607.15" width="6.0" height="20.25" fill="#b9a0d1"/>
<rect x="834.48" y="516.05" width="6.0" height="91.11" fill="#3597cf"/>
<rect x="834.48" y="354.08" width="6.0" height="161.97" fill="#9ccce6"/>
<rect x="842.30" y="617.28" width="6.0" height="10.12" fill="#b9a0d1"/>
<rect x="842.30" y="465.43" width="6.0" height="151.84" fill="#3597cf"/>
<rect x="842.30" y="374.32" width="6.0" height="91.11" fill="#9ccce6"/>
<rect x="850.12" y="495.80" width="6.0" height="131.60" fill="#3597cf"/>
<rect x="850.12" y="364.20" width="6.0" height="131.60" fill="#9ccce6"/>
<rect x="857.94" y="617.28" width="6.0" height="10.12" fill="#3597cf"/>
<rect x="857.94" y="384.45" width="6.0" height="232.83" fill="#9ccce6"/>
<rect x="865.76" y="617.28" width="6.0" height="10.12" fill="#b9a0d1"/>
<rect x="865.76" y="505.92" width="6.0" height="111.35" fill="#3597cf"/>
<rect x="865.76" y="354.08" width="6.0" height="151.84" fill="#9ccce6"/>
<rect x="873.58" y="445.19" width="6.0" height="182.21" fill="#3597cf"/>
<rect x="873.58" y="354.08" width="6.0" height="91.11" fill="#9ccce6"/>
<rect x="881.40" y="556.54" width="6.0" height="70.86" fill="#b9a0d1"/>
<rect x="881.40" y="536.29" width="6.0" height="20.25" fill="#3597cf"/>
<rect x="881.40" y="384.45" width="6.0" height="151.85" fill="#9ccce6"/>
<rect x="889.22" y="455.31" width="6.0" height="172.09" fill="#b9a0d1"/>
<rect x="889.22" y="445.19" width="6.0" height="10.12" fill="#3597cf"/>
<rect x="889.22" y="364.20" width="6.0" height="80.98" fill="#9ccce6"/>
<rect x="897.05" y="546.42" width="6.0" height="80.98" fill="#b9a0d1"/>
<rect x="897.05" y="364.20" width="6.0" height="182.21" fill="#9ccce6"/>
<rect x="904.87" y="455.31" width="6.0" height="172.09" fill="#b9a0d1"/>
<rect x="904.87" y="384.45" width="6.0" height="70.86" fill="#3597cf"/>
<rect x="904.87" y="374.32" width="6.0" height="10.12" fill="#9ccce6"/>
<rect x="912.69" y="566.66" width="6.0" height="60.74" fill="#b9a0d1"/>
<rect x="912.69" y="384.45" width="6.0" height="182.21" fill="#3597cf"/>
<rect x="912.69" y="374.32" width="6.0" height="10.12" fill="#9ccce6"/>
<rect x="920.51" y="374.32" width="6.0" height="253.07" fill="#b9a0d1"/>
<rect x="920.51" y="364.20" width="6.0" height="10.12" fill="#9ccce6"/>
<rect x="928.33" y="445.19" width="6.0" height="182.21" fill="#b9a0d1"/>
<rect x="928.33" y="435.06" width="6.0" height="10.12" fill="#3597cf"/>
<rect x="928.33" y="384.45" width="6.0" height="50.62" fill="#9ccce6"/>
<rect x="936.15" y="597.03" width="6.0" height="30.37" fill="#3597cf"/>
<rect x="936.15" y="384.45" width="6.0" height="212.58" fill="#9ccce6"/>
<rect x="943.97" y="617.28" width="6.0" height="10.12" fill="#b9a0d1"/>
<rect x="943.97" y="354.08" width="6.0" height="263.20" fill="#9ccce6"/>
<rect x="951.79" y="384.45" width="6.0" height="242.95" fill="#b9a0d1"/>
<rect x="959.61" y="384.45" width="6.0" height="242.95" fill="#3597cf"/>
<rect x="959.61" y="374.32" width="6.0" height="10.12" fill="#9ccce6"/>
<rect x="967.43" y="394.57" width="6.0" height="232.83" fill="#b9a0d1"/>
<rect x="967.43" y="374.32" width="6.0" height="20.25" fill="#3597cf"/>
<rect x="967.43" y="364.20" width="6.0" height="10.12" fill="#9ccce6"/>
<rect x="975.25" y="414.82" width="6.0" height="212.58" fill="#b9a0d1"/>
<rect x="975.25" y="384.45" width="6.0" height="30.37" fill="#9ccce6"/>
<rect x="983.07" y="364.20" width="6.0" height="263.20" fill="#b9a0d1"/>
<rect x="983.07" y="354.08" width="6.0" height="10.12" fill="#9ccce6"/>
<rect x="990.89" y="536.29" width="6.0" height="91.11" fill="#b9a0d1"/>
<rect x="990.89" y="384.45" width="6.0" height="151.85" fill="#9ccce6"/>
<rect x="998.71" y="607.15" width="6.0" height="20.25" fill="#b9a0d1"/>
<rect x="998.71" y="354.08" width="6.0" height="253.07" fill="#9ccce6"/>
<rect x="1006.54" y="607.15" width="6.0" height="20.25" fill="#b9a0d1"/>
<rect x="1006.54" y="384.45" width="6.0" height="222.71" fill="#9ccce6"/>
<rect x="1014.36" y="516.05" width="6.0" height="111.35" fill="#b9a0d1"/>
<rect x="1014.36" y="384.45" width="6.0" height="131.60" fill="#9ccce6"/>
<rect x="1022.18" y="384.45" width="6.0" height="242.95" fill="#b9a0d1"/>
<rect x="1022.18" y="354.08" width="6.0" height="30.37" fill="#3597cf"/>
<rect x="1030.00" y="475.55" width="6.0" height="151.85" fill="#b9a0d1"/>
<rect x="1030.00" y="404.69" width="6.0" height="70.86" fill="#3597cf"/>
<rect x="1030.00" y="384.45" width="6.0" height="20.25" fill="#9ccce6"/>
<rect x="1037.82" y="597.03" width="6.0" height="30.37" fill="#b9a0d1"/>
<rect x="1037.82" y="384.45" width="6.0" height="212.58" fill="#3597cf"/>
<rect x="1045.64" y="394.57" width="6.0" height="232.83" fill="#b9a0d1"/>
<rect x="1045.64" y="364.20" width="6.0" height="30.37" fill="#3597cf"/>
<rect x="1053.46" y="617.28" width="6.0" height="10.12" fill="#b9a0d1"/>
<rect x="1053.46" y="394.57" width="6.0" height="222.71" fill="#3597cf"/>
<rect x="1053.46" y="374.32" width="6.0" height="20.25" fill="#9ccce6"/>
<rect x="1061.28" y="384.45" width="6.0" height="242.95" fill="#b9a0d1"/>
<rect x="1069.10" y="394.57" width="6.0" height="232.83" fill="#b9a0d1"/>
<rect x="1069.10" y="364.20" width="6.0" height="30.37" fill="#3597cf"/>
<rect x="1076.92" y="617.28" width="6.0" height="10.12" fill="#b9a0d1"/>
<rect x="1076.92" y="394.57" width="6.0" height="222.71" fill="#3597cf"/>
<rect x="1076.92" y="374.32" width="6.0" height="20.25" fill="#9ccce6"/>
<rect x="1084.74" y="394.57" width="6.0" height="232.83" fill="#b9a0d1"/>
<rect x="1084.74" y="354.08" width="6.0" height="40.49" fill="#3597cf"/>
<rect x="1092.56" y="586.91" width="6.0" height="40.49" fill="#b9a0d1"/>
<rect x="1092.56" y="323.71" width="6.0" height="263.20" fill="#9ccce6"/>
<rect x="1100.38" y="597.03" width="6.0" height="30.37" fill="#b9a0d1"/>
<rect x="1100.38" y="414.82" width="6.0" height="182.21" fill="#3597cf"/>
<rect x="1100.38" y="384.45" width="6.0" height="30.37" fill="#9ccce6"/>
<rect x="1108.20" y="455.31" width="6.0" height="172.09" fill="#b9a0d1"/>
<rect x="1108.20" y="384.45" width="6.0" height="70.86" fill="#3597cf"/>
<rect x="1116.03" y="536.29" width="6.0" height="91.11" fill="#b9a0d1"/>
<rect x="1116.03" y="384.45" width="6.0" height="151.85" fill="#3597cf"/>
<rect x="1116.03" y="374.32" width="6.0" height="10.12" fill="#9ccce6"/>
<rect x="1123.85" y="384.45" width="6.0" height="242.95" fill="#3597cf"/>
<rect x="1123.85" y="364.20" width="6.0" height="20.25" fill="#9ccce6"/>
<rect x="1131.67" y="617.28" width="6.0" height="10.12" fill="#b9a0d1"/>
<rect x="1131.67" y="364.20" width="6.0" height="253.07" fill="#3597cf"/>
<rect x="1139.49" y="384.45" width="6.0" height="242.95" fill="#3597cf"/>
<rect x="1139.49" y="374.32" width="6.0" height="10.12" fill="#9ccce6"/>
<rect x="1147.31" y="455.31" width="6.0" height="172.09" fill="#3597cf"/>
<rect x="1147.31" y="384.45" width="6.0" height="70.86" fill="#9ccce6"/>
<rect x="1155.13" y="556.54" width="6.0" height="70.86" fill="#3597cf"/>
<rect x="1155.13" y="354.08" width="6.0" height="202.46" fill="#9ccce6"/>
<rect x="1162.95" y="607.15" width="6.0" height="20.25" fill="#b9a0d1"/>
<rect x="1162.95" y="424.94" width="6.0" height="182.21" fill="#3597cf"/>
<rect x="1162.95" y="364.20" width="6.0" height="60.74" fill="#9ccce6"/>
<rect x="1170.77" y="617.28" width="6.0" height="10.12" fill="#b9a0d1"/>
<rect x="1170.77" y="374.32" width="6.0" height="242.95" fill="#9ccce6"/>
<rect x="1178.59" y="576.78" width="6.0" height="50.62" fill="#3597cf"/>
<rect x="1178.59" y="354.08" width="6.0" height="222.71" fill="#9ccce6"/>
<rect x="1186.41" y="394.57" width="6.0" height="232.83" fill="#3597cf"/>
<rect x="1186.41" y="384.45" width="6.0" height="10.12" fill="#9ccce6"/>
<rect x="1194.23" y="607.15" width="6.0" height="20.25" fill="#3597cf"/>
<rect x="1194.23" y="354.08" width="6.0" height="253.07" fill="#9ccce6"/>
<rect x="1202.05" y="384.45" width="6.0" height="242.95" fill="#9ccce6"/>
<rect x="1209.87" y="384.45" width="6.0" height="242.95" fill="#3597cf"/>
<rect x="1209.87" y="364.20" width="6.0" height="20.25" fill="#9ccce6"/>
<rect x="1217.69" y="597.03" width="6.0" height="30.37" fill="#3597cf"/>
<rect x="1217.69" y="374.32" width="6.0" height="222.71" fill="#9ccce6"/>
<rect x="1225.51" y="617.28" width="6.0" height="10.12" fill="#b9a0d1"/>
<rect x="1225.51" y="384.45" width="6.0" height="232.83" fill="#9ccce6"/>
<rect x="1233.34" y="424.94" width="6.0" height="202.46" fill="#b9a0d1"/>
<rect x="1233.34" y="354.08" width="6.0" height="70.86" fill="#9ccce6"/>
<rect x="1241.16" y="384.45" width="6.0" height="242.95" fill="#b9a0d1"/>
<rect x="1241.16" y="374.32" width="6.0" height="10.12" fill="#9ccce6"/>
<rect x="1248.98" y="364.20" width="6.0" height="263.20" fill="#b9a0d1"/>
<rect x="1248.98" y="354.08" width="6.0" height="10.12" fill="#9ccce6"/>
<rect x="1256.80" y="576.78" width="6.0" height="50.62" fill="#b9a0d1"/>
<rect x="365" y="576.28" width="1006" height="1" fill="#000" fill-opacity="0.08"/>
<text x="361.5" y="580.58" text-anchor="end" font-family="Liberation Sans" font-size="10.4" letter-spacing="-0.3" fill="#2a2a2a">5</text>
<rect x="365" y="525.67" width="1006" height="1" fill="#000" fill-opacity="0.08"/>
<text x="361.5" y="529.97" text-anchor="end" font-family="Liberation Sans" font-size="10.4" letter-spacing="-0.3" fill="#2a2a2a">10</text>
<rect x="365" y="475.05" width="1006" height="1" fill="#000" fill-opacity="0.08"/>
<text x="361.5" y="479.35" text-anchor="end" font-family="Liberation Sans" font-size="10.4" letter-spacing="-0.3" fill="#2a2a2a">15</text>
<rect x="365" y="424.44" width="1006" height="1" fill="#000" fill-opacity="0.08"/>
<text x="361.5" y="428.74" text-anchor="end" font-family="Liberation Sans" font-size="10.4" letter-spacing="-0.3" fill="#2a2a2a">20</text>
<rect x="365" y="373.82" width="1006" height="1" fill="#000" fill-opacity="0.08"/>
<text x="361.5" y="378.12" text-anchor="end" font-family="Liberation Sans" font-size="10.4" letter-spacing="-0.3" fill="#2a2a2a">25</text>
<rect x="365" y="323.21" width="1006" height="1" fill="#000" fill-opacity="0.08"/>
<text x="361.5" y="327.51" text-anchor="end" font-family="Liberation Sans" font-size="10.4" letter-spacing="-0.3" fill="#2a2a2a">30</text>
<rect x="365" y="272.60" width="1006" height="1" fill="#000" fill-opacity="0.08"/>
<text x="361.5" y="276.90" text-anchor="end" font-family="Liberation Sans" font-size="10.4" letter-spacing="-0.3" fill="#2a2a2a">35</text>
<rect x="365" y="221.98" width="1006" height="1" fill="#000" fill-opacity="0.08"/>
<text x="361.5" y="226.28" text-anchor="end" font-family="Liberation Sans" font-size="10.4" letter-spacing="-0.3" fill="#2a2a2a">40</text>
<text x="361.5" y="631.20" text-anchor="end" font-family="Liberation Sans" font-size="10.4" letter-spacing="-0.3" fill="#2a2a2a">0</text>
<rect x="366" y="626.90" width="1006" height="1" fill="#9a9a9a"/>
<rect x="372.30" y="627.40" width="1" height="4.7" fill="#777"/>
<text x="375.80" y="642.2" text-anchor="middle" font-family="Liberation Sans" font-size="10.4" letter-spacing="-0.35" fill="#2a2a2a">1:13</text>
<rect x="466.11" y="627.40" width="1" height="4.7" fill="#777"/>
<text x="466.61" y="642.2" text-anchor="middle" font-family="Liberation Sans" font-size="10.4" letter-spacing="-0.35" fill="#2a2a2a">11:14</text>
<rect x="559.92" y="627.40" width="1" height="4.7" fill="#777"/>
<text x="560.42" y="642.2" text-anchor="middle" font-family="Liberation Sans" font-size="10.4" letter-spacing="-0.35" fill="#2a2a2a">11:15</text>
<rect x="653.73" y="627.40" width="1" height="4.7" fill="#777"/>
<text x="654.23" y="642.2" text-anchor="middle" font-family="Liberation Sans" font-size="10.4" letter-spacing="-0.35" fill="#2a2a2a">11:16</text>
<rect x="747.54" y="627.40" width="1" height="4.7" fill="#777"/>
<text x="748.04" y="642.2" text-anchor="middle" font-family="Liberation Sans" font-size="10.4" letter-spacing="-0.35" fill="#2a2a2a">11:17</text>
<rect x="841.35" y="627.40" width="1" height="4.7" fill="#777"/>
<text x="841.85" y="642.2" text-anchor="middle" font-family="Liberation Sans" font-size="10.4" letter-spacing="-0.35" fill="#2a2a2a">11:18</text>
<rect x="935.16" y="627.40" width="1" height="4.7" fill="#777"/>
<text x="935.66" y="642.2" text-anchor="middle" font-family="Liberation Sans" font-size="10.4" letter-spacing="-0.35" fill="#2a2a2a">11:19</text>
<rect x="1028.97" y="627.40" width="1" height="4.7" fill="#777"/>
<text x="1029.47" y="642.2" text-anchor="middle" font-family="Liberation Sans" font-size="10.4" letter-spacing="-0.35" fill="#2a2a2a">11:20</text>
<rect x="1122.78" y="627.40" width="1" height="4.7" fill="#777"/>
<text x="1123.28" y="642.2" text-anchor="middle" font-family="Liberation Sans" font-size="10.4" letter-spacing="-0.35" fill="#2a2a2a">11:21</text>
<rect x="1216.59" y="627.40" width="1" height="4.7" fill="#777"/>
<text x="1217.09" y="642.2" text-anchor="middle" font-family="Liberation Sans" font-size="10.4" letter-spacing="-0.35" fill="#2a2a2a">11:22</text>
<rect x="1310.40" y="627.40" width="1" height="4.7" fill="#777"/>
<text x="1310.90" y="642.2" text-anchor="middle" font-family="Liberation Sans" font-size="10.4" letter-spacing="-0.35" fill="#2a2a2a">11:23</text>
</svg>

<!-- legend -->
<div class="a" style="left:365px;top:654px;width:15.5px;height:15.5px;background:#9ccce6"></div>
<div class="t" style="left:389px;top:655.5px;font-size:10.1px;color:#333;line-height:12px">10.111.111.111</div>
<div class="a" style="left:474.5px;top:654px;width:15.5px;height:15.5px;background:#3597cf"></div>
<div class="t" style="left:498px;top:655.5px;font-size:10.1px;color:#333;line-height:12px">10.123.123.11</div>
<div class="a" style="left:578.5px;top:654px;width:15.5px;height:15.5px;background:#b9a0d1"></div>
<div class="t" style="left:603px;top:655.5px;font-size:10.1px;color:#333;line-height:12px">10.111.111.123</div>

</body></html>
